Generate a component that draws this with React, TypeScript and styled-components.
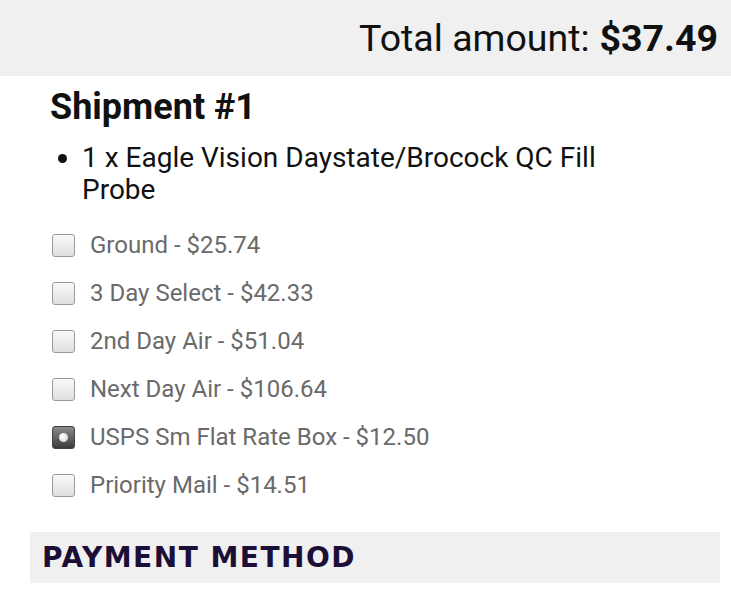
import React from "react";
import styled, { createGlobalStyle } from "styled-components";

const GlobalStyle = createGlobalStyle`
  body {
    margin: 0;
    background: #ffffff;
    font-family: Roboto, "Liberation Sans", sans-serif;
  }
`;

const Page = styled.div`
  width: 731px;
  height: 594px;
  overflow: hidden;
`;

const TotalBar = styled.div`
  height: 76px;
  background: #f0f0f0;
  display: flex;
  align-items: center;
  justify-content: flex-end;
  padding-right: 13px;
  font-size: 37.5px;
  color: #111;
`;

const Amount = styled.strong`
  font-weight: 700;
  margin-left: 10px;
`;

const Shipment = styled.section`
  padding: 11px 0 0 50px;
`;

const Title = styled.h2`
  margin: 0;
  font-size: 36px;
  font-weight: 700;
  line-height: 40px;
  color: #111;
`;

const Items = styled.ul`
  margin: 15px 0 0;
  padding-left: 32px;
  width: 530px;
  font-size: 28px;
  line-height: 32px;
  color: #111;
`;

const Options = styled.div`
  margin-top: 15px;
  display: flex;
  flex-direction: column;
`;

const Option = styled.label`
  height: 48px;
  display: flex;
  align-items: center;
  gap: 15px;
  font-size: 24px;
  color: #6a6a6a;
`;

const Box = styled.span<{ $checked?: boolean }>`
  width: 21px;
  height: 21px;
  margin-left: 2px;
  border: 1px solid ${({ $checked }) => ($checked ? "#444" : "#9a9a9a")};
  border-radius: 3px;
  display: flex;
  align-items: center;
  justify-content: center;
  background: ${({ $checked }) =>
    $checked
      ? "linear-gradient(#8a8a8a, #3c3c3c)"
      : "linear-gradient(#fafafa, #dedede)"};
`;

const Dot = styled.span`
  width: 9px;
  height: 9px;
  border-radius: 50%;
  background: radial-gradient(circle at 40% 35%, #ffffff, #cfcfcf);
`;

const PaymentBar = styled.div`
  margin: 23px 11px 0 30px;
  height: 51px;
  background: #f0f0f0;
  display: flex;
  align-items: center;
  padding-left: 12px;
  font-family: "DejaVu Sans", sans-serif;
  font-weight: 700;
  font-size: 28px;
  letter-spacing: 1.5px;
  color: #1b0f38;
`;

const rates = [
  { name: "Ground", price: "$25.74" },
  { name: "3 Day Select", price: "$42.33" },
  { name: "2nd Day Air", price: "$51.04" },
  { name: "Next Day Air", price: "$106.64" },
  { name: "USPS Sm Flat Rate Box", price: "$12.50", checked: true },
  { name: "Priority Mail", price: "$14.51" },
];

export default function App() {
  return (
    <Page>
      <GlobalStyle />
      <TotalBar>
        Total amount:<Amount>$37.49</Amount>
      </TotalBar>
      <Shipment>
        <Title>Shipment #1</Title>
        <Items>
          <li>1 x Eagle Vision Daystate/Brocock QC Fill Probe</li>
        </Items>
        <Options>
          {rates.map((r) => (
            <Option key={r.name}>
              <Box $checked={r.checked}>{r.checked && <Dot />}</Box>
              {r.name} - {r.price}
            </Option>
          ))}
        </Options>
      </Shipment>
      <PaymentBar>PAYMENT METHOD</PaymentBar>
    </Page>
  );
}
